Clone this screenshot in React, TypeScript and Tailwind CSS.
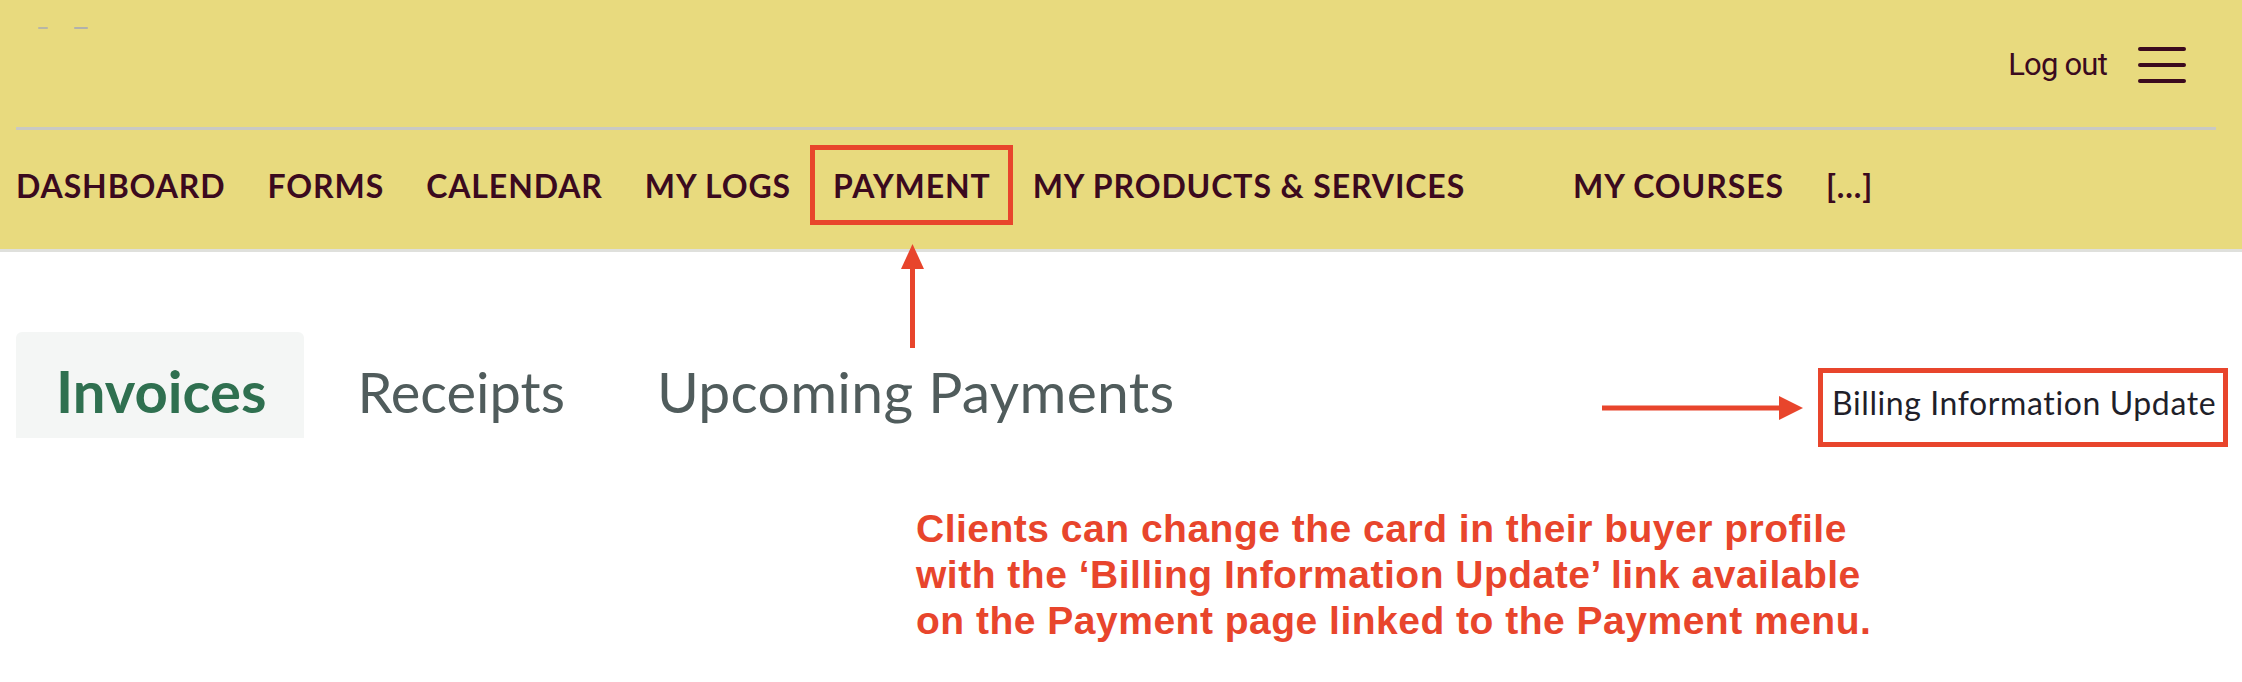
import React from 'react';

// --- NAV CONFIG ---
const NAV_ITEMS = ['DASHBOARD', 'FORMS', 'CALENDAR', 'MY LOGS', 'PAYMENT', 'MY PRODUCTS & SERVICES', 'MY COURSES', '[...]'];

const ANNOTATION = '#e8452c';

export default function App() {
  return (
    <div className="relative w-[2242px] h-[682px] overflow-hidden bg-white">
      {/* --- HEADER --- */}
      <header className="h-[252px] bg-[#e8da7e] border-b-[3px] border-[#dfe0dc]">
        <div className="relative h-[127px] flex items-center justify-end gap-[31px] pr-[56px] pt-[2px]">
          {/* cut-off logo remnants */}
          <div className="absolute left-[38px] top-[27px] w-[10px] h-[2px] rounded-full bg-[#a3a6b8]/70"></div>
          <div className="absolute left-[74px] top-[27px] w-[14px] h-[2px] rounded-full bg-[#a3a6b8]/80"></div>

          <span className="text-[31px] leading-none text-[#3b0a1e] tracking-[-0.8px] font-['Roboto',sans-serif]">Log out</span>
          <div className="flex flex-col gap-[12px]">
            <div className="w-[48px] h-[4px] rounded-full bg-[#3b0a1e]"></div>
            <div className="w-[48px] h-[4px] rounded-full bg-[#3b0a1e]"></div>
            <div className="w-[48px] h-[4px] rounded-full bg-[#3b0a1e]"></div>
          </div>
        </div>

        <div className="ml-4 mr-[26px] h-[3px] bg-[#c9c9c3]"></div>

        <nav className="flex pl-4 pt-[40px] gap-[42px] font-['Lato',sans-serif] font-bold text-[32px] leading-none text-[#3b0a1e] tracking-[0.9px]">
          {NAV_ITEMS.map((item) => (
            <a key={item} className={`relative whitespace-nowrap ${item === 'MY COURSES' ? 'ml-[66px]' : ''}`}>
              {item}
              {item === 'PAYMENT' && (
                <span className="absolute -left-[23px] -right-[22px] -top-[25px] -bottom-[23px] border-[5px] border-[#e8452c]"></span>
              )}
            </a>
          ))}
        </nav>
      </header>

      {/* --- ANNOTATION: arrow up to PAYMENT --- */}
      <svg className="absolute left-[900px] top-[243px]" width="25" height="106" viewBox="0 0 25 106">
        <path d="M12.5 1 L24 26 L1 26 Z" fill={ANNOTATION} />
        <rect x="10" y="24" width="5" height="81" fill={ANNOTATION} />
      </svg>

      {/* --- TABS ROW --- */}
      <div className="flex items-start justify-between mt-[80px] pl-4 pr-[14px]">
        <div className="flex items-end font-['Lato',sans-serif] leading-none">
          <div className="rounded-t-[6px] bg-[#f4f6f5] pl-[40px] pr-[38px] pt-[30px] pb-[18px] h-[106px]">
            <span className="text-[58px] font-bold text-[#2f7050]">Invoices</span>
          </div>
          <div className="ml-[53px] pb-[18px]">
            <span className="text-[56px] text-[#505c5c]">Receipts</span>
          </div>
          <div className="ml-[92px] pb-[18px]">
            <span className="text-[57px] text-[#505c5c] tracking-[0.3px]">Upcoming Payments</span>
          </div>
        </div>

        <div className="flex items-center gap-[14px] mt-[36px]">
          <svg width="202" height="26" viewBox="0 0 202 26">
            <rect x="0" y="10.5" width="180" height="5" fill={ANNOTATION} />
            <path d="M177 1 L201 13 L177 25 Z" fill={ANNOTATION} />
          </svg>
          <div className="w-[410px] h-[79px] border-[5px] border-[#e8452c] pl-[9px] pt-[14px]">
            <a className="font-['Lato',sans-serif] text-[32px] leading-none text-[#1f1f2a] whitespace-nowrap tracking-[0.6px]">
              Billing Information Update
            </a>
          </div>
        </div>
      </div>

      {/* --- ANNOTATION NOTE --- */}
      <p className="mt-[59px] pl-[916px] font-['Liberation_Sans',Arial,sans-serif] font-bold text-[39px] leading-[46px] tracking-[0.5px] text-[#e8452c]">
        Clients can change the card in their buyer profile
        <br />
        with the ‘Billing Information Update’ link available
        <br />
        on the Payment page linked to the Payment menu.
      </p>
    </div>
  );
}
